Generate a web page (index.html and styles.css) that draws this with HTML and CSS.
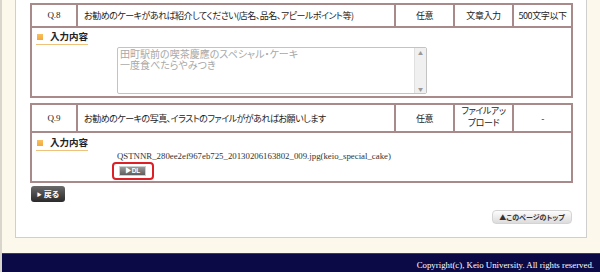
FILE: index.html
```html
<!DOCTYPE html>
<html lang="ja">
<head>
  <meta charset="UTF-8">
  <title>アンケート回答確認</title>
  <link rel="stylesheet" href="styles.css">
</head>
<body>
  <div class="page">
    <div class="panel">
      <table class="qa">
        <colgroup>
          <col class="c-no"><col class="c-text"><col class="c-sub"><col class="c-sub"><col class="c-sub">
        </colgroup>
        <tr class="q-head">
          <td class="q-no">Q.8</td>
          <td class="q-text">お勧めのケーキがあれば紹介してください(店名、品名、アピールポイント等)</td>
          <td class="q-cell">任意</td>
          <td class="q-cell">文章入力</td>
          <td class="q-cell">500文字以下</td>
        </tr>
        <tr>
          <td colspan="5" class="answer">
            <div class="answer-label"><span class="mark"></span>入力内容</div>
            <div class="textbox">
              <div class="textbox-text">田町駅前の喫茶慶應のスペシャル・ケーキ<br>一度食べたらやみつき</div>
              <div class="scroll"><span>▲</span><span>▼</span></div>
            </div>
          </td>
        </tr>
      </table>

      <table class="qa">
        <colgroup>
          <col class="c-no"><col class="c-text"><col class="c-sub"><col class="c-sub"><col class="c-sub">
        </colgroup>
        <tr class="q-head">
          <td class="q-no">Q.9</td>
          <td class="q-text">お勧めのケーキの写真、イラストのファイルががあればお願いします</td>
          <td class="q-cell">任意</td>
          <td class="q-cell q-two">ファイルアッ<br>プロード</td>
          <td class="q-cell">-</td>
        </tr>
        <tr>
          <td colspan="5" class="answer answer-file">
            <div class="answer-label"><span class="mark"></span>入力内容</div>
            <div class="file-name">QSTNNR_280ee2ef967eb725_20130206163802_009.jpg(keio_special_cake)</div>
            <div class="dl-mark"><a class="btn-dl" href="#">▶DL</a></div>
          </td>
        </tr>
      </table>

      <div class="back-row"><a class="btn-back" href="#"><span class="tri">▶</span>戻る</a></div>
      <div class="top-row"><a class="btn-top" href="#">▲このページのトップ</a></div>
    </div>
  </div>
  <div class="footer">Copyright(c), Keio University. All rights reserved.</div>
</body>
</html>
```

FILE: styles.css
```css
:root {
  --cream: #fdf8ec;
  --line: #a98a8a;
  --orange: #f3a93a;
  --navy: #0b0946;
  --jp: "Noto Sans CJK JP", "Noto Sans", sans-serif;
  --serif: "Liberation Serif", "DejaVu Serif", serif;
}

html,
body {
  margin: 0;
  padding: 0;
}

body {
  background-color: var(--cream);
  border-left: 2px solid #d9d5cc;
  font-family: var(--jp);
  font-feature-settings: "palt";
  color: #222;
  height: 272px;
  overflow: hidden;
}

.page {
  padding-left: 13px;
}

.panel {
  box-sizing: border-box;
  width: 572px;
  height: 238px;
  background-color: #fff;
  border: 1px solid #cfcfcf;
  border-top: none;
  padding: 3px 0 0 14px;
}

.qa {
  border-collapse: collapse;
  width: 542px;
  table-layout: fixed;
  margin-bottom: 5px;
}

.c-no { width: 46px; }
.c-text { width: 318px; }
.c-sub { width: 59px; }

.qa td {
  border: 2px solid var(--line);
  padding: 0;
  font-size: 9px;
  line-height: 11px;
}

.q-head td {
  height: 21px;
}

.q-no {
  text-align: center;
  font-family: var(--serif);
}

.q-text {
  padding-left: 6px !important;
  letter-spacing: -0.5px;
}

.q-cell {
  text-align: center;
  letter-spacing: -0.4px;
}

.q-two {
  line-height: 12px !important;
  padding-bottom: 2px !important;
}

.answer {
  padding: 3px 0 2px 4px !important;
  vertical-align: top;
}

.answer-label {
  display: inline-block;
  width: 52px;
  font-size: 9.5px;
  font-weight: bold;
  line-height: 11px;
  padding-bottom: 2px;
  border-bottom: 1px solid #efc27c;
}

.mark {
  display: inline-block;
  width: 6px;
  height: 6px;
  margin: 0 7px 1px 1px;
  background: linear-gradient(#f8c060, var(--orange));
  vertical-align: middle;
}

.textbox {
  display: flex;
  box-sizing: border-box;
  width: 310px;
  height: 47px;
  margin: 2px 0 0 81px;
  border: 1px solid #c3c3c3;
  border-radius: 2px;
}

.textbox-text {
  flex-grow: 1;
  padding: 0 2px;
  font-size: 10px;
  line-height: 11px;
  color: #a8a8a8;
}

.scroll {
  width: 11px;
  display: flex;
  flex-direction: column;
  justify-content: space-between;
  background-color: #f0f0f0;
  border-left: 1px solid #e0e0e0;
  font-size: 5px;
  line-height: 9px;
  text-align: center;
  color: #999;
}

.answer-file {
  padding-top: 4px !important;
  padding-bottom: 1px !important;
}

.file-name {
  margin: 1px 0 0 81px;
  font-family: var(--serif);
  font-size: 8.8px;
  line-height: 9px;
  color: #333;
}

.dl-mark {
  display: inline-block;
  margin: 1px 0 0 76px;
  padding: 2px 6px 2px 5px;
  border: 2px solid #dd1f26;
  border-radius: 4px;
  line-height: 0;
}

.btn-dl {
  display: inline-block;
  width: 27px;
  height: 10px;
  box-sizing: border-box;
  background: linear-gradient(#9a9a9a, #5d5d5d);
  border: 1px solid #d0d0d0;
  color: #fff;
  font-family: "Liberation Sans", sans-serif;
  font-size: 6.5px;
  font-weight: bold;
  line-height: 8px;
  text-align: center;
  text-decoration: none;
}

.back-row {
  margin-top: -2px;
  line-height: 0;
}

.btn-back {
  display: inline-block;
  box-sizing: border-box;
  width: 34px;
  height: 16px;
  margin-left: 1px;
  background: linear-gradient(#6a6a6a, #2a2a2a);
  border-radius: 3px;
  color: #fff;
  font-size: 8px;
  line-height: 16px;
  font-weight: bold;
  text-decoration: none;
  text-align: center;
}

.tri {
  font-size: 5px;
  margin-right: 2px;
  vertical-align: 1px;
}

.top-row {
  display: flex;
  justify-content: flex-end;
  width: 542px;
  margin-top: 8px;
  line-height: 0;
}

.btn-top {
  display: inline-block;
  box-sizing: border-box;
  width: 80px;
  height: 14px;
  background: linear-gradient(#fdfdfd, #dcdcdc);
  border: 1px solid #d4d4d4;
  border-radius: 4px;
  color: #333;
  font-size: 7px;
  line-height: 12px;
  font-weight: bold;
  text-align: center;
  text-decoration: none;
}

.footer {
  margin-top: 15px;
  height: 19px;
  background-color: var(--navy);
  border-top: 1px solid #3b3a6a;
  color: #fff;
  font-family: var(--serif);
  font-size: 8.8px;
  line-height: 22px;
  text-align: right;
  padding-right: 6px;
}
```
